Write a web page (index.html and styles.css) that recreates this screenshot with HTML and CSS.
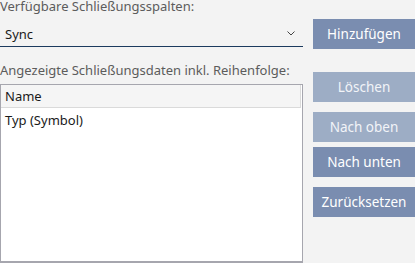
FILE: index.html
```html
<!DOCTYPE html>
<html lang="de">

<head>
    <meta charset="UTF-8">
    <title>Schließungsspalten</title>
    <link rel="stylesheet" href="styles.css">
</head>

<body>
    <div class="panel">
        <div class="left">
            <div class="label label-top">Verfügbare Schließungsspalten:</div>
            <div class="combo">
                <span>Sync</span>
                <svg class="chevron" width="8" height="5" viewBox="0 0 8 5">
                    <path d="M0.5 0.5 L4 4 L7.5 0.5" fill="none" stroke="#444" stroke-width="1"/>
                </svg>
            </div>
            <div class="label label-list">Angezeigte Schließungsdaten inkl. Reihenfolge:</div>
            <div class="list">
                <div class="list-head">Name</div>
                <div class="list-item">Typ (Symbol)</div>
            </div>
        </div>
        <div class="right">
            <button class="btn btn-add">Hinzufügen</button>
            <button class="btn btn-delete off">Löschen</button>
            <button class="btn btn-up off">Nach oben</button>
            <button class="btn btn-down">Nach unten</button>
            <button class="btn btn-reset">Zurücksetzen</button>
        </div>
    </div>
</body>

</html>
```

FILE: styles.css
```css
* {
    box-sizing: border-box;
}

body {
    margin: 0;
    background: #f3f3f3;
    font-family: "Noto Sans", "Open Sans", sans-serif;
    font-size: 13px;
    color: #1a1a1a;
    overflow: hidden;
}

.panel {
    display: grid;
    grid-template-columns: 303px 102px;
    column-gap: 10px;
    height: 263px;
}

.left {
    display: flex;
    flex-direction: column;
}

.label {
    color: #5c5c5c;
    line-height: 16px;
}

.label-top {
    height: 19px;
    margin-top: -2px;
    margin-bottom: 2px;
}

.combo {
    height: 28px;
    display: flex;
    align-items: center;
    justify-content: space-between;
    padding: 2px 8px 0 5px;
    border-bottom: 1px solid #1c3a5e;
}

.chevron {
    margin-top: -1px;
}

.label-list {
    height: 37px;
    padding-top: 15px;
}

.list {
    flex: 1;
    background: #fff;
    border: 1px solid #a6a6ae;
    border-bottom-width: 2px;
}

.list-head {
    height: 23px;
    line-height: 22px;
    padding-left: 4px;
    background: #f5f5f5;
    border-bottom: 1px solid #dadada;
    border-right: 1px solid #dadada;
    margin-right: 1px;
}

.list-item {
    padding-left: 4px;
    line-height: 24px;
}

.right {
    display: flex;
    flex-direction: column;
    padding-top: 19px;
}

.btn {
    height: 30px;
    border: none;
    background: #7a8db0;
    color: #fff;
    font-family: inherit;
    font-size: 13.5px;
    padding: 0;
}

.btn.off {
    background: #9dadc5;
    color: #f2f4f8;
}

.btn-delete {
    margin-top: 23px;
}

.btn-up {
    margin-top: 10px;
}

.btn-down {
    margin-top: 5px;
}

.btn-reset {
    margin-top: 10px;
}
```
